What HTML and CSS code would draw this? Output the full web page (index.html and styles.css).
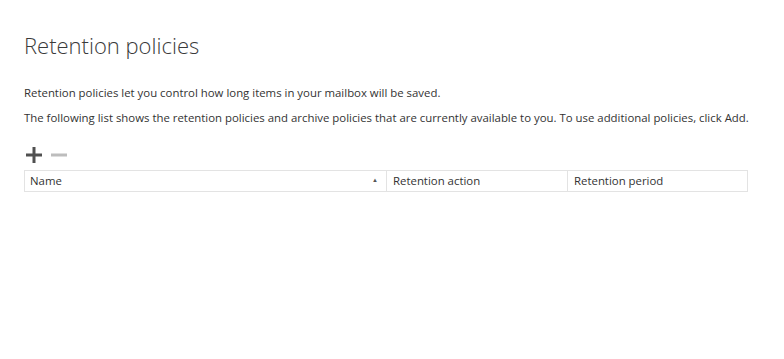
FILE: index.html
```html
<!DOCTYPE html>
<html>
<head>
<meta charset="utf-8">
<link rel="stylesheet" href="styles.css">
</head>
<body>
<div class="page">
  <h1 class="title">Retention policies</h1>
  <p class="text first">Retention policies let you control how long items in your mailbox will be saved.</p>
  <p class="text second">The following list shows the retention policies and archive policies that are currently available to you. To use additional policies, click Add.</p>
  <div class="toolbar">
    <svg class="icon" width="16" height="16" viewBox="0 0 16 16"><rect x="0" y="6.5" width="16" height="3" fill="#505050"/><rect x="6.5" y="0" width="3" height="16" fill="#505050"/></svg>
    <svg class="icon" width="16" height="16" viewBox="0 0 16 16"><rect x="0" y="6.5" width="16" height="3" fill="#bdbdbd"/></svg>
  </div>
  <div class="table">
    <div class="cell name">Name<span class="sort">&#9650;</span></div>
    <div class="cell">Retention action</div>
    <div class="cell">Retention period</div>
  </div>
</div>
</body>
</html>
```

FILE: styles.css
```css
html, body { margin: 0; padding: 0; background: #fff; }
body { font-family: "Open Sans", "Noto Sans", sans-serif; color: #333; }
.page { padding: 30px 0 0 24px; }
.title { margin: 0; font-weight: 300; font-size: 22px; line-height: 30px; color: #3a3a3a; }
.text { margin: 0; font-size: 11.4px; line-height: 16px; color: #333; white-space: nowrap; }
.first { margin-top: 25px; }
.second { margin-top: 9px; }
.toolbar { display: flex; gap: 9px; margin-top: 21px; padding-left: 2px; height: 20px; align-items: flex-start; }
.table { display: grid; grid-template-columns: 361px 181px 1fr; border: 1px solid #e3e3e3; width: 722px; height: 20px; margin-top: 3px; }
.cell { font-size: 11.4px; line-height: 20px; padding-left: 6px; color: #333; border-left: 1px solid #e3e3e3; position: relative; }
.cell.name { border-left: none; padding-left: 5px; }
.sort { position: absolute; right: 8px; top: -1px; font-size: 6px; color: #555; }
```
